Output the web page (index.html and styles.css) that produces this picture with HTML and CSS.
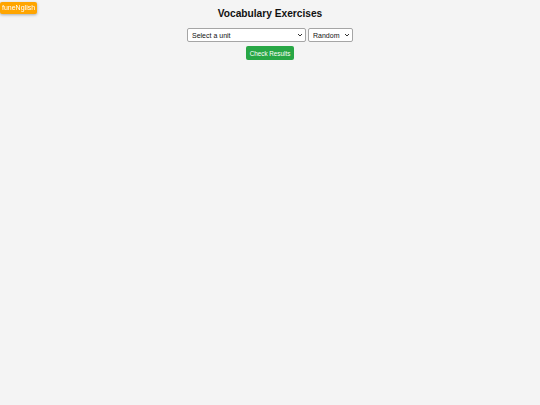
FILE: index.html
```html
<!DOCTYPE html>
<html lang="en">
<head>
    <meta charset="UTF-8">
    <meta name="viewport" content="width=device-width, initial-scale=1.0">
    <title>Vocabulary Exercises</title>
    <link rel="stylesheet" href="styles.css">
</head>
<body>
    <div class="brand">funeNglish</div>

    <main class="container">
        <h1 class="title">Vocabulary Exercises</h1>
        <div class="controls">
            <select class="unit-select" id="unitSelect">
                <option value="">Select a unit</option>
            </select>
            <select class="mode-select" id="modeSelect">
                <option value="random">Random</option>
                <option value="order">In order</option>
            </select>
        </div>
        <button class="check-btn" id="checkBtn">Check Results</button>
        <div id="exercises"></div>
    </main>
</body>
</html>
```

FILE: styles.css
```css
body {
    margin: 0;
    background: #f4f4f4;
    color: #111;
    font-family: "Liberation Sans", Arial, sans-serif;
}

.brand {
    position: fixed;
    top: 2px;
    left: 0;
    background: #ffa500;
    color: #fff;
    font-size: 7px;
    line-height: 12px;
    padding: 0 2px;
    border-radius: 2px;
    box-shadow: 0 1px 3px rgba(0, 0, 0, 0.3);
}

.container {
    display: flex;
    flex-direction: column;
    align-items: center;
    padding-top: 8px;
}

.title {
    margin: 0 0 8px;
    font-size: 10.2px;
    line-height: 12px;
}

.controls {
    display: flex;
    gap: 2px;
}

.unit-select,
.mode-select {
    appearance: none;
    -webkit-appearance: none;
    height: 14px;
    font-size: 7px;
    font-family: "Liberation Sans", Arial, sans-serif;
    border: 1px solid #a5a5a5;
    border-radius: 2px;
    color: #111;
    padding: 0 8px 0 4px;
    /* small chevron on the right */
    background: #fff url("data:image/svg+xml,%3Csvg xmlns='http://www.w3.org/2000/svg' width='6' height='4' viewBox='0 0 6 4'%3E%3Cpath d='M1 1l2 2 2-2' fill='none' stroke='%23333' stroke-width='1'/%3E%3C/svg%3E") no-repeat right 2px center;
}

.unit-select {
    width: 119px;
}

.mode-select {
    width: 45px;
}

.check-btn {
    margin-top: 4px;
    height: 14px;
    padding: 0 4px;
    background: #28a745;
    color: #fff;
    border: none;
    border-radius: 2px;
    font-size: 6.3px;
    font-family: "Liberation Sans", Arial, sans-serif;
    cursor: pointer;
}
```
